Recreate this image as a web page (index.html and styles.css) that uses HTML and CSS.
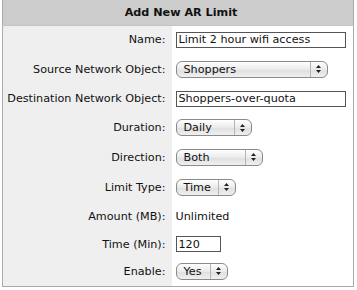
FILE: index.html
```html
<!DOCTYPE html>
<html lang="en">
<head>
    <meta charset="UTF-8">
    <title>Add New AR Limit</title>
    <link rel="stylesheet" href="styles.css">
</head>
<body>
    <table class="form-table">
        <tr class="head-row">
            <th colspan="2">Add New AR Limit</th>
        </tr>
        <tr class="r-name">
            <td class="label">Name:</td>
            <td class="field"><input class="text wide" type="text" value="Limit 2 hour wifi access"></td>
        </tr>
        <tr class="r-source">
            <td class="label">Source Network Object:</td>
            <td class="field">
                <div class="select w-source"><span class="opt">Shoppers</span><span class="arrows"><svg width="7" height="10" viewBox="0 0 7 10"><path d="M3.5 1 L6 4 H1 Z M3.5 9 L6 6 H1 Z" fill="#222"/></svg></span></div>
            </td>
        </tr>
        <tr class="r-dest">
            <td class="label">Destination Network Object:</td>
            <td class="field"><input class="text wide" type="text" value="Shoppers-over-quota"></td>
        </tr>
        <tr class="r-duration">
            <td class="label">Duration:</td>
            <td class="field">
                <div class="select w-duration"><span class="opt">Daily</span><span class="arrows"><svg width="7" height="10" viewBox="0 0 7 10"><path d="M3.5 1 L6 4 H1 Z M3.5 9 L6 6 H1 Z" fill="#222"/></svg></span></div>
            </td>
        </tr>
        <tr class="r-direction">
            <td class="label">Direction:</td>
            <td class="field">
                <div class="select w-direction"><span class="opt">Both</span><span class="arrows"><svg width="7" height="10" viewBox="0 0 7 10"><path d="M3.5 1 L6 4 H1 Z M3.5 9 L6 6 H1 Z" fill="#222"/></svg></span></div>
            </td>
        </tr>
        <tr class="r-type">
            <td class="label">Limit Type:</td>
            <td class="field">
                <div class="select w-type"><span class="opt">Time</span><span class="arrows"><svg width="7" height="10" viewBox="0 0 7 10"><path d="M3.5 1 L6 4 H1 Z M3.5 9 L6 6 H1 Z" fill="#222"/></svg></span></div>
            </td>
        </tr>
        <tr class="r-amount">
            <td class="label">Amount (MB):</td>
            <td class="field plain">Unlimited</td>
        </tr>
        <tr class="r-time">
            <td class="label">Time (Min):</td>
            <td class="field"><input class="text short" type="text" value="120"></td>
        </tr>
        <tr class="r-enable">
            <td class="label">Enable:</td>
            <td class="field">
                <div class="select w-enable"><span class="opt">Yes</span><span class="arrows"><svg width="7" height="10" viewBox="0 0 7 10"><path d="M3.5 1 L6 4 H1 Z M3.5 9 L6 6 H1 Z" fill="#222"/></svg></span></div>
            </td>
        </tr>
    </table>
</body>
</html>
```

FILE: styles.css
```css
* {
    margin: 0;
    padding: 0;
    box-sizing: border-box;
}

body {
    font-family: "DejaVu Sans", Verdana, sans-serif;
    font-size: 11.2px;
    color: #111;
    background: #fff;
    padding: 0 3px 0 2px;
}

.form-table {
    width: 352px;
    border-collapse: collapse;
    border: 1px solid #aaa;
    border-top: 0;
}

.head-row th {
    height: 25px;
    background: #cccccc;
    font-weight: bold;
    font-size: 11.2px;
    text-align: center;
    padding-left: 6px;
    border-bottom: 1px solid #c4c4c4;
}

.label {
    width: 169px;
    background: #efefef;
    text-align: right;
    padding-right: 6px;
    white-space: nowrap;
}

.field {
    background: #fff;
    padding-left: 4px;
}

.r-name td { height: 29px; }
.r-source td { height: 30px; }
.r-dest td { height: 29px; }
.r-duration td { height: 29px; }
.r-direction td { height: 30px; }
.r-type td { height: 30px; }
.r-amount td { height: 29px; }
.r-time td { height: 26px; }
.r-enable td { height: 29px; }

.text {
    display: block;
    height: 16px;
    border: 1px solid #555;
    font-family: inherit;
    font-size: 11.2px;
    color: #111;
    padding: 0 2px;
    background: #fff;
}

.wide { width: 170px; }
.short { width: 45px; }

.select {
    display: flex;
    align-items: stretch;
    height: 17px;
    border: 1px solid #8a8a8a;
    border-radius: 6px;
    background: linear-gradient(#ffffff, #eaeaea 50%, #dedede 51%, #f0f0f0);
}

.select .opt {
    flex: 1;
    padding-left: 7px;
    line-height: 15px;
}

.select .arrows {
    width: 17px;
    border-left: 1px solid #b5b5b5;
    display: flex;
    align-items: center;
    justify-content: center;
}

.w-source { width: 152px; }
.w-duration { width: 76px; }
.w-direction { width: 87px; }
.w-type { width: 60px; }
.w-enable { width: 52px; }
```
